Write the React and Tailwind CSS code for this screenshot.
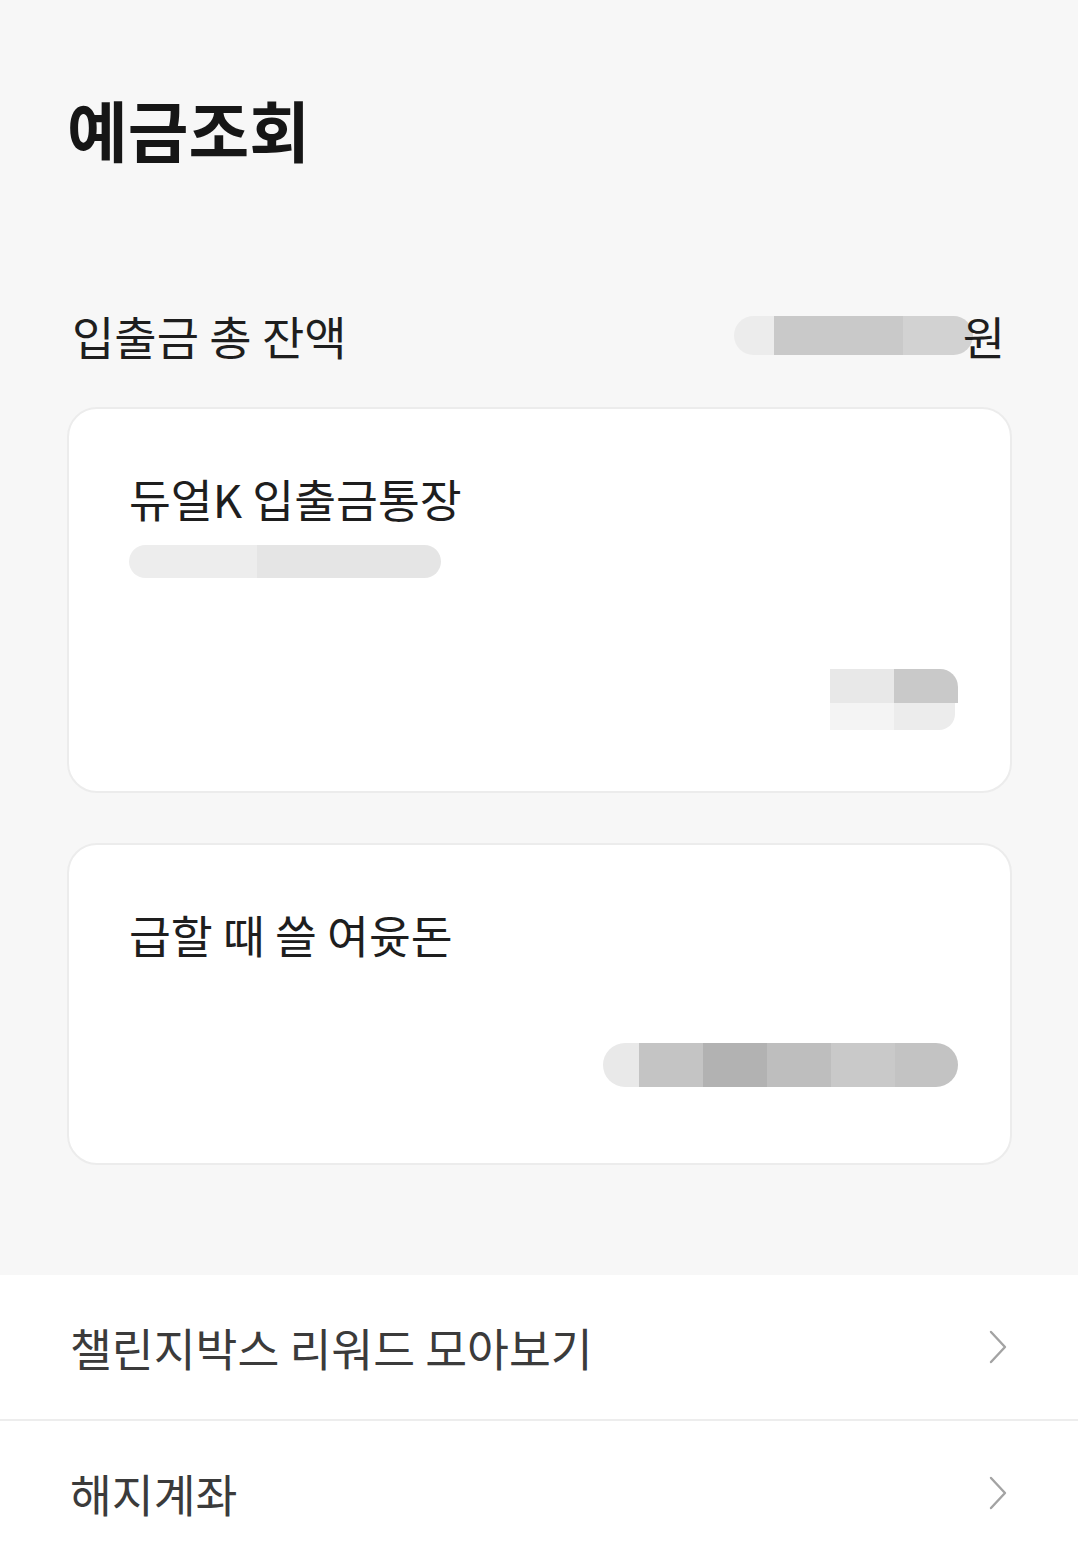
const font = { fontFamily: '"Noto Sans CJK KR", "Noto Sans", sans-serif' };

const Chevron = () => (
  <svg width="20" height="34" viewBox="0 0 20 34" fill="none" className="shrink-0">
    <polyline
      points="3,2 17,17 3,32"
      stroke="#a3a3a3"
      strokeWidth="2.4"
      strokeLinecap="round"
      strokeLinejoin="round"
    />
  </svg>
);

// masked numbers drawn as grey mosaic pills
const Mask = ({ parts, className = "" }) => (
  <div className={`flex overflow-hidden rounded-full ${className}`}>
    {parts.map(([w, c], i) => (
      <div key={i} className="h-full" style={{ width: w, background: c }} />
    ))}
  </div>
);

const MenuRow = ({ label }) => (
  <div className="flex items-center justify-between h-[144px] pl-[70px] pr-[70px]">
    <span className="text-[45.5px] text-[#3b3b3b]">{label}</span>
    <Chevron />
  </div>
);

export default function App() {
  return (
    <div className="w-[1078px] min-h-[1557px] bg-[#f7f7f7] flex flex-col" style={font}>
      <div className="pl-[67px] pr-[66px]">
        <h1 className="pt-[80px] text-[66px] font-bold leading-[96px] text-[#161616]">
          예금조회
        </h1>

        <div className="mt-[129px] flex items-center justify-between pl-[5px] pr-[7px] h-[60px]">
          <span className="text-[46px] text-[#1e1e1e]">입출금 총 잔액</span>
          <div className="flex items-center">
            <Mask
              className="h-[39px]"
              parts={[
                [40, "#ececec"],
                [129, "#c9c9c9"],
                [70, "#d2d2d2"],
              ]}
            />
            <span className="text-[46px] text-[#1e1e1e] -ml-[10px]">원</span>
          </div>
        </div>

        <div className="mt-[42px] h-[386px] bg-white rounded-[30px] border-2 border-[#ececec] flex flex-col pl-[60px] pr-[52px] pt-[64px]">
          <span className="text-[45.5px] leading-[50px] text-[#1e1e1e]">듀얼K 입출금통장</span>
          <Mask
            className="mt-[22px] h-[33px] w-[312px]"
            parts={[
              [128, "#ededed"],
              [184, "#e5e5e5"],
            ]}
          />
          <div className="mt-[91px] ml-auto flex flex-col">
            <div className="flex h-[34px]">
              <div className="w-[64px] bg-[#e8e8e8]" />
              <div className="w-[64px] bg-[#c9c9c9] rounded-tr-[18px]" />
            </div>
            <div className="flex h-[27px]">
              <div className="w-[64px] bg-[#f4f4f4]" />
              <div className="w-[61px] bg-[#ececec] rounded-br-[16px]" />
            </div>
          </div>
        </div>

        <div className="mt-[50px] h-[322px] bg-white rounded-[30px] border-2 border-[#ececec] flex flex-col pl-[60px] pr-[52px] pt-[64px]">
          <span className="text-[45.5px] leading-[50px] text-[#1e1e1e]">급할 때 쓸 여윳돈</span>
          <Mask
            className="mt-[84px] ml-auto h-[44px]"
            parts={[
              [36, "#e9e9e9"],
              [64, "#c4c4c4"],
              [64, "#b2b2b2"],
              [64, "#bebebe"],
              [64, "#c9c9c9"],
              [63, "#c3c3c3"],
            ]}
          />
        </div>
      </div>

      <div className="mt-[110px] flex-1 bg-white">
        <MenuRow label="챌린지박스 리워드 모아보기" />
        <div className="h-[2px] bg-[#ededed]" />
        <MenuRow label="해지계좌" />
      </div>
    </div>
  );
}
